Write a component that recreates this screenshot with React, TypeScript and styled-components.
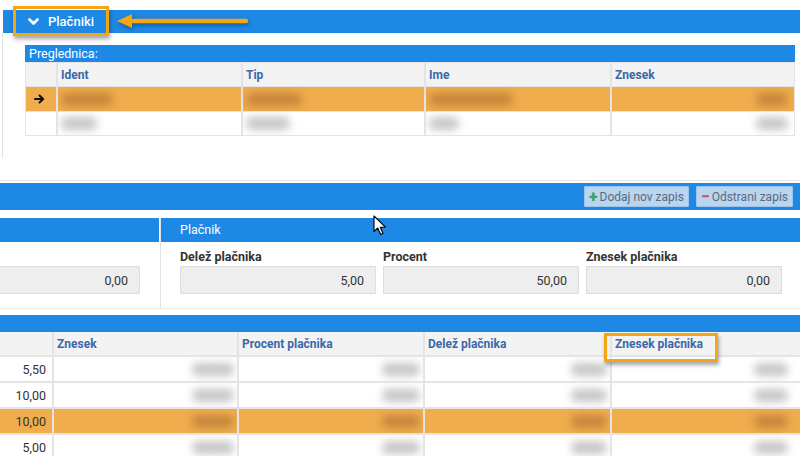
import React from 'react';
import styled, { createGlobalStyle, css } from 'styled-components';

const GlobalStyle = createGlobalStyle`
  html, body {
    margin: 0;
    padding: 0;
    background: #ffffff;
    font-family: Roboto, "Liberation Sans", Arial, sans-serif;
  }
`;

const BLUE = '#1e88e5';
const ORANGE = '#f0ad4e';
const MARK = '#f4a614';
const HEAD_TEXT = '#3a68a8';
const LINE = '#e4e4e4';

const Page = styled.div`
  position: relative;
  width: 800px;
  height: 456px;
  overflow: hidden;
  background: #fff;
`;

/* ---------- Plačniki section ---------- */

const Payers = styled.section`
  padding-top: 10px;
`;

const SectionBar = styled.div`
  margin-left: 3px;
  height: 23px;
  background: ${BLUE};
  display: flex;
  align-items: center;
  gap: 9px;
  padding-left: 25px;
`;

const SectionTitle = styled.span`
  color: #fff;
  font-size: 13px;
  font-weight: 500;
`;

const PayersBody = styled.div`
  height: 113px;
  margin-left: 2px;
  border-left: 1px solid #e2e2e2;
  padding: 12px 5px 0 22px;
`;

const Grid = styled.div`
  background: ${LINE};
  padding: 0 1px 1px;
`;

const GridTitle = styled.div`
  margin: 0 -1px;
  height: 17px;
  background: ${BLUE};
  color: #fff;
  font-size: 12.5px;
  line-height: 17px;
  padding-left: 4px;
`;

const GridRow = styled.div<{ $cols: string; $h: number }>`
  display: grid;
  grid-template-columns: ${p => p.$cols};
  column-gap: 2px;
  margin-top: 1px;
  height: ${p => p.$h}px;
`;

const Cell = styled.div<{ $kind?: 'head' | 'sel' | 'body'; $right?: boolean }>`
  display: flex;
  align-items: center;
  justify-content: ${p => (p.$right ? 'flex-end' : 'flex-start')};
  padding: 0 6px 0 3px;
  overflow: hidden;
  font-size: 12.5px;
  color: #333;
  background: #fff;
  ${p => p.$kind === 'head' && css`
    background: #f3f3f3;
    color: ${HEAD_TEXT};
    font-weight: 700;
    font-size: 12px;
  `}
  ${p => p.$kind === 'sel' && css`
    background: ${ORANGE};
  `}
`;

// redacted value: a soft blurred blot in place of the figure
const Smudge = styled.span<{ $w: number; $dark?: boolean }>`
  display: inline-block;
  width: ${p => p.$w}px;
  height: 13px;
  border-radius: 6px;
  background: ${p => (p.$dark ? '#c5863b' : '#c6c6c6')};
  filter: blur(4px);
`;

/* ---------- toolbar ---------- */

const ToolbarWrap = styled.div`
  margin-top: 22px;
  border-top: 1px solid #e8e8e8;
  padding-top: 2px;
`;

const Toolbar = styled.div`
  height: 27px;
  background: ${BLUE};
  display: flex;
  align-items: center;
  justify-content: flex-end;
  gap: 7px;
  padding-right: 7px;
`;

const ToolButton = styled.button`
  height: 21px;
  display: flex;
  align-items: center;
  gap: 2px;
  padding: 0 4px;
  background: #b8d6f2;
  border: 1px solid #9fc4e8;
  border-radius: 1px;
  color: #5d6a76;
  font-family: inherit;
  font-size: 12px;
`;

const Sign = styled.span<{ $color: string }>`
  color: ${p => p.$color};
  font-weight: 900;
  font-size: 16px;
  line-height: 1;
`;

/* ---------- details ---------- */

const Details = styled.div`
  margin-top: 8px;
  display: grid;
  grid-template-columns: 159px 1fr;
  column-gap: 1px;
  border-bottom: 1px solid #ececec;
`;

const Panel = styled.div<{ $divider?: boolean }>`
  overflow: hidden;
  ${p => p.$divider && css`border-left: 1px solid #e2e2e2;`}
`;

const PanelHead = styled.div`
  height: 24px;
  background: ${BLUE};
  color: #fff;
  font-size: 12.5px;
  line-height: 24px;
  padding-left: 19px;
`;

const Fields = styled.div<{ $end?: boolean }>`
  display: flex;
  gap: 7px;
  padding: 7px 19px 14px;
  justify-content: ${p => (p.$end ? 'flex-end' : 'flex-start')};
`;

const Field = styled.div`
  flex: 0 0 196px;
  display: flex;
  flex-direction: column;
  gap: 2px;
`;

const Label = styled.div`
  font-size: 12.5px;
  font-weight: 700;
  color: #333;
  line-height: 15px;
  min-height: 15px;
`;

const ValueBox = styled.div`
  height: 26px;
  background: #eeeeee;
  border: 1px solid #dedede;
  font-size: 12.5px;
  color: #333;
  display: flex;
  align-items: center;
  justify-content: flex-end;
  padding-right: 11px;
`;

/* ---------- lower grid ---------- */

const Lower = styled.div`
  margin-top: 6px;
  background: ${LINE};
`;

const LowerTitle = styled.div`
  height: 17px;
  background: ${BLUE};
`;

const LowerRow = styled.div<{ $h: number }>`
  display: grid;
  grid-template-columns: 52px 183px 184px 185px 1fr;
  column-gap: 2px;
  margin-bottom: 2px;
  height: ${p => p.$h}px;
`;

/* ---------- overlays ---------- */

const MarkBox = styled.div<{ $x: number; $y: number; $w: number; $h: number }>`
  position: absolute;
  left: ${p => p.$x}px;
  top: ${p => p.$y}px;
  width: ${p => p.$w}px;
  height: ${p => p.$h}px;
  box-sizing: border-box;
  border: 3px solid ${MARK};
  box-shadow: 1px 3px 4px rgba(0, 0, 0, 0.35);
  pointer-events: none;
`;

const Overlay = styled.svg<{ $x: number; $y: number }>`
  position: absolute;
  left: ${p => p.$x}px;
  top: ${p => p.$y}px;
  overflow: visible;
`;

const Chevron = () => (
  <svg width="11" height="8" viewBox="0 0 11 8">
    <path d="M1.5 1.5 L5.5 5.5 L9.5 1.5" fill="none" stroke="#fff" strokeWidth="2.6" strokeLinecap="round" strokeLinejoin="round" />
  </svg>
);

const RowArrow = () => (
  <svg width="11" height="10" viewBox="0 0 11 10">
    <path d="M1 5 H9 M5.5 1.5 L9.2 5 L5.5 8.5" fill="none" stroke="#111" strokeWidth="2" strokeLinecap="round" strokeLinejoin="round" />
  </svg>
);

const payerCols = '30px 183px 181px 184px 1fr';

const payerRows = [
  { sel: true, w: [52, 56, 84, 32] },
  { sel: false, w: [36, 44, 30, 32] },
];

const lowerRows = [
  { value: '5,50', sel: false },
  { value: '10,00', sel: false },
  { value: '10,00', sel: true },
  { value: '5,00', sel: false },
];

export default function App() {
  return (
    <Page>
      <GlobalStyle />

      <Payers>
        <SectionBar>
          <Chevron />
          <SectionTitle>Plačniki</SectionTitle>
        </SectionBar>
        <PayersBody>
          <Grid>
            <GridTitle>Preglednica:</GridTitle>
            <GridRow $cols={payerCols} $h={23}>
              <Cell $kind="head" />
              <Cell $kind="head">Ident</Cell>
              <Cell $kind="head">Tip</Cell>
              <Cell $kind="head">Ime</Cell>
              <Cell $kind="head">Znesek</Cell>
            </GridRow>
            {payerRows.map((row, i) => {
              const kind = row.sel ? 'sel' : 'body';
              return (
                <GridRow key={i} $cols={payerCols} $h={i === 0 ? 24 : 23}>
                  <Cell $kind={kind} style={{ justifyContent: 'center' }}>
                    {row.sel && <RowArrow />}
                  </Cell>
                  <Cell $kind={kind}><Smudge $w={row.w[0]} $dark={row.sel} /></Cell>
                  <Cell $kind={kind}><Smudge $w={row.w[1]} $dark={row.sel} /></Cell>
                  <Cell $kind={kind}><Smudge $w={row.w[2]} $dark={row.sel} /></Cell>
                  <Cell $kind={kind} $right><Smudge $w={row.w[3]} $dark={row.sel} /></Cell>
                </GridRow>
              );
            })}
          </Grid>
        </PayersBody>
      </Payers>

      <ToolbarWrap>
        <Toolbar>
          <ToolButton>
            <Sign $color="#3aa55a">+</Sign>
            Dodaj nov zapis
          </ToolButton>
          <ToolButton>
            <Sign $color="#d9534f">−</Sign>
            Odstrani zapis
          </ToolButton>
        </Toolbar>
      </ToolbarWrap>

      <Details>
        <Panel>
          <PanelHead />
          <Fields $end>
            <Field>
              <Label />
              <ValueBox>0,00</ValueBox>
            </Field>
          </Fields>
        </Panel>
        <Panel $divider>
          <PanelHead>Plačnik</PanelHead>
          <Fields>
            <Field>
              <Label>Delež plačnika</Label>
              <ValueBox>5,00</ValueBox>
            </Field>
            <Field>
              <Label>Procent</Label>
              <ValueBox>50,00</ValueBox>
            </Field>
            <Field>
              <Label>Znesek plačnika</Label>
              <ValueBox>0,00</ValueBox>
            </Field>
          </Fields>
        </Panel>
      </Details>

      <Lower>
        <LowerTitle />
        <LowerRow $h={23}>
          <Cell $kind="head" />
          <Cell $kind="head">Znesek</Cell>
          <Cell $kind="head">Procent plačnika</Cell>
          <Cell $kind="head">Delež plačnika</Cell>
          <Cell $kind="head">Znesek plačnika</Cell>
        </LowerRow>
        {lowerRows.map((row, i) => {
          const kind = row.sel ? 'sel' : 'body';
          return (
            <LowerRow key={i} $h={24}>
              <Cell $kind={kind} $right>{row.value}</Cell>
              <Cell $kind={kind} $right style={{ paddingRight: 3 }}><Smudge $w={42} $dark={row.sel} /></Cell>
              <Cell $kind={kind} $right style={{ paddingRight: 3 }}><Smudge $w={38} $dark={row.sel} /></Cell>
              <Cell $kind={kind} $right style={{ paddingRight: 3 }}><Smudge $w={36} $dark={row.sel} /></Cell>
              <Cell $kind={kind} $right style={{ paddingRight: 12 }}><Smudge $w={34} $dark={row.sel} /></Cell>
            </LowerRow>
          );
        })}
      </Lower>

      {/* callouts */}
      <MarkBox $x={13} $y={6} $w={96} $h={30} />
      <Overlay $x={116} $y={13} width="134" height="16" viewBox="0 0 134 16" style={{ filter: 'drop-shadow(1px 2px 2px rgba(0,0,0,0.35))' }}>
        <path d="M12 8 H130" stroke={MARK} strokeWidth="4.5" strokeLinecap="round" />
        <path d="M1 8 L16 1 L16 15 Z" fill={MARK} />
      </Overlay>
      <MarkBox $x={604} $y={333} $w={114} $h={29} />

      {/* mouse pointer */}
      <Overlay $x={373} $y={215} width="14" height="21" viewBox="0 0 14 21">
        <path d="M1 1 L1 16.5 L4.8 13 L7.6 19.5 L10 18.5 L7.3 12.2 L12.4 12.2 Z" fill="#fff" stroke="#000" strokeWidth="1.1" strokeLinejoin="round" />
      </Overlay>
    </Page>
  );
}
